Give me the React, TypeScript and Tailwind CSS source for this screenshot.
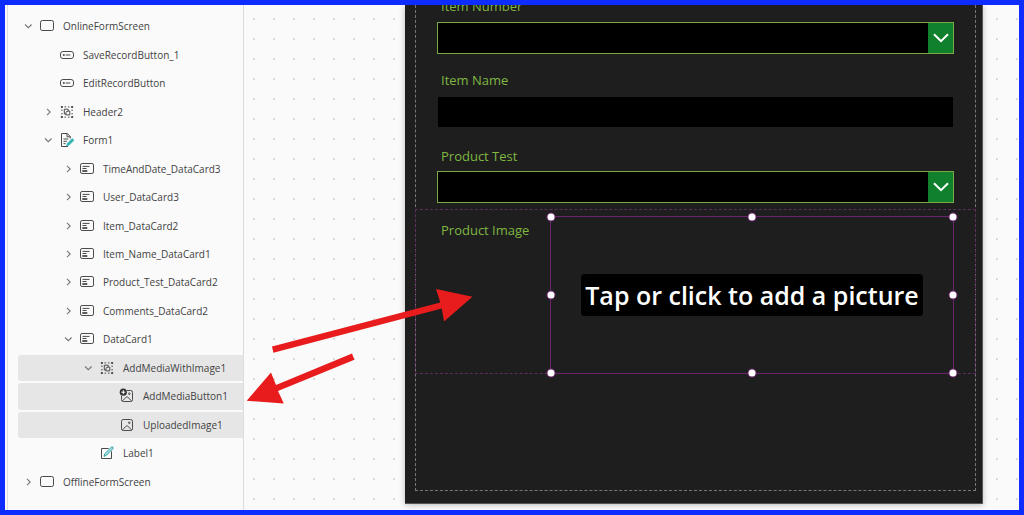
import React from "react";

type IconName = "screen" | "button" | "group" | "form" | "card" | "addMedia" | "image" | "label";

type Node = {
  name: string;
  icon: IconName;
  level: 0 | 1 | 2 | 3 | 4;
  state?: "open" | "closed";
  selected?: boolean;
};

const nodes: Node[] = [
  { name: "OnlineFormScreen", icon: "screen", level: 0, state: "open" },
  { name: "SaveRecordButton_1", icon: "button", level: 1 },
  { name: "EditRecordButton", icon: "button", level: 1 },
  { name: "Header2", icon: "group", level: 1, state: "closed" },
  { name: "Form1", icon: "form", level: 1, state: "open" },
  { name: "TimeAndDate_DataCard3", icon: "card", level: 2, state: "closed" },
  { name: "User_DataCard3", icon: "card", level: 2, state: "closed" },
  { name: "Item_DataCard2", icon: "card", level: 2, state: "closed" },
  { name: "Item_Name_DataCard1", icon: "card", level: 2, state: "closed" },
  { name: "Product_Test_DataCard2", icon: "card", level: 2, state: "closed" },
  { name: "Comments_DataCard2", icon: "card", level: 2, state: "closed" },
  { name: "DataCard1", icon: "card", level: 2, state: "open" },
  { name: "AddMediaWithImage1", icon: "group", level: 3, state: "open", selected: true },
  { name: "AddMediaButton1", icon: "addMedia", level: 4, selected: true },
  { name: "UploadedImage1", icon: "image", level: 4, selected: true },
  { name: "Label1", icon: "label", level: 3 },
  { name: "OfflineFormScreen", icon: "screen", level: 0, state: "closed" },
];

const indent = ["pl-0.5", "pl-[22px]", "pl-[42px]", "pl-[62px]", "pl-[82px]"];

const drawings: Record<IconName, React.ReactNode> = {
  screen: <rect x="1.5" y="2.5" width="13" height="10" rx="1.8" />,
  button: (
    <>
      <rect x="1.5" y="4.5" width="13" height="7" rx="2.4" />
      <circle cx="4.8" cy="8" r="1" fill="currentColor" stroke="none" />
      <path d="M6.7 8h4.6" />
    </>
  ),
  group: (
    <>
      <path d="M5.5 2.9h1.6M9 2.9h1.5M5.5 13.1H7M9 13.1h1.5M2.9 5.5V7M2.9 9v1.5M13.1 5.5V7M13.1 9v1.5" />
      <path d="M7 10H5.3V5.2h3.9v1.9" />
      <path d="M9.2 7.1h1.6v3.8H7V8.6q0-1.5 2.2-1.5z" />
      <g fill="currentColor" stroke="none">
        <rect x="1.9" y="1.9" width="2" height="2" rx=".4" />
        <rect x="12.1" y="1.9" width="2" height="2" rx=".4" />
        <rect x="1.9" y="12.1" width="2" height="2" rx=".4" />
        <rect x="12.1" y="12.1" width="2" height="2" rx=".4" />
      </g>
    </>
  ),
  form: (
    <>
      <path d="M9 14.5H2.5v-13h5.8l3 3v2M8 1.8v3h3.2M4.5 7h4.8M4.5 9.3h3.4M4.5 11.6h2" />
      <path d="m7.6 13.8.6-2.3 5-5 1.8 1.8-5 5z" fill="#35b3b3" stroke="#35b3b3" strokeWidth=".6" />
    </>
  ),
  card: (
    <>
      <rect x="1.5" y="2.5" width="13" height="10" rx="1.6" />
      <path d="M3.5 5.4h7M3.5 7.5h4" />
      <path d="M3.3 10h5" strokeWidth="1.8" />
    </>
  ),
  addMedia: (
    <>
      <path d="M8 2.5h3.7q1.8 0 1.8 1.8v7.4q0 1.8-1.8 1.8H4.3q-1.8 0-1.8-1.8V8" />
      <path d="M3.3 13 7.2 9.2q.8-.7 1.6 0L12.7 13" />
      <circle cx="10.3" cy="5.7" r=".8" />
      <circle cx="4.3" cy="4.2" r="3.6" fill="#333" stroke="none" />
      <path d="M4.3 2.2v4M2.3 4.2h4" stroke="#fff" />
    </>
  ),
  image: (
    <>
      <rect x="2.5" y="2.5" width="11" height="11" rx="1.8" />
      <path d="M3.3 13 7.2 9.2q.8-.7 1.6 0L12.7 13" />
      <circle cx="10.3" cy="5.7" r=".8" />
    </>
  ),
  label: (
    <>
      <path d="M9.6 3.5H2.5v10h10V6.4" />
      <path d="m5 11.3.7-2.4 6.6-6.6q.9-.8 1.6-.1t-.1 1.6l-6.5 6.6z" fill="#a9e0e0" stroke="#2ba3a3" />
    </>
  ),
};

function NodeIcon({ name }: { name: IconName }) {
  return (
    <svg
      aria-hidden="true"
      viewBox="0 0 16 16"
      className="size-4 shrink-0 text-[#4a4a4a]"
      fill="none"
      stroke="currentColor"
      strokeWidth="1"
    >
      {drawings[name]}
    </svg>
  );
}

function TreeRow({ node }: { node: Node }) {
  return (
    <li
      role="treeitem"
      aria-level={node.level + 1}
      aria-selected={!!node.selected}
      aria-expanded={node.state ? node.state === "open" : undefined}
      className="flex min-h-6 flex-1 basis-0 py-px"
    >
      <div
        className={`flex flex-1 items-center rounded-l-[3px] ${indent[node.level]} ${node.selected ? "bg-[#e6e6e6]" : ""}`}
      >
        {node.state ? (
          <button type="button" aria-label={`Toggle ${node.name}`} className="size-4 shrink-0 text-[#777]">
            <svg viewBox="0 0 16 16" className="size-4" fill="none" stroke="currentColor" strokeWidth="1.1">
              <path d={node.state === "open" ? "m5 6.5 3.3 3.2 3.3-3.2" : "m7 4.8 3.2 3.2-3.2 3.2"} />
            </svg>
          </button>
        ) : (
          <span className="size-4 shrink-0" />
        )}
        <span className="ml-[3px] flex items-center gap-2">
          <NodeIcon name={node.icon} />
          <span className="text-[10px] leading-4 whitespace-nowrap text-[#424242]">{node.name}</span>
        </span>
      </div>
    </li>
  );
}

function FieldLabel({ id, children }: { id: string; children: string }) {
  return (
    <label htmlFor={id} className="ml-1 block text-[13px] leading-5 text-[#7fb742]">
      {children}
    </label>
  );
}

function Dropdown({ id }: { id: string }) {
  return (
    <div className="relative flex h-8 border border-[#7aa843]">
      <select id={id} className="min-w-0 flex-1 appearance-none bg-black text-sm text-white outline-none">
        <option value=""></option>
      </select>
      <span className="pointer-events-none absolute inset-y-0 right-0 flex w-[25px] items-center justify-center bg-[#10802c]">
        <svg viewBox="0 0 16 10" className="h-2.5 w-4" fill="none" stroke="#fff" strokeWidth="2">
          <path d="m1 1.3 7 6.9 7-6.9" />
        </svg>
      </span>
    </div>
  );
}

const handles = [
  "left-0 top-0",
  "left-1/2 top-0",
  "left-full top-0",
  "left-0 top-1/2",
  "left-full top-1/2",
  "left-0 top-full",
  "left-1/2 top-full",
  "left-full top-full",
];

const dots =
  "bg-[radial-gradient(circle,#dadada_1px,transparent_1px)] bg-[length:20px_20px]";

export default function App() {
  return (
    <main className="flex min-h-screen overflow-hidden border-5 border-[#0d2cff] bg-[#fafafa] font-['Open_Sans','Noto_Sans',sans-serif]">
      <nav aria-label="Tree view" className="ml-0.5 flex w-[237px] shrink-0 border-x border-[#dcdcdc]">
        <ul role="tree" className="flex flex-1 flex-col pt-[7px] pb-3.5 pl-2.5">
          {nodes.map((node) => (
            <TreeRow key={node.name} node={node} />
          ))}
        </ul>
      </nav>

      <section aria-label="Canvas" className="relative flex min-w-0 flex-1">
        <div className={`w-[161px] shrink-0 bg-position-[0px_4px] ${dots}`} />

        <div className="mb-1.5 flex min-w-0 flex-1 flex-col border-r border-b border-[#555] bg-[#1e1e1e] pr-1.5 pb-3 pl-2.5 shadow-[0_1px_6px_rgba(0,0,0,0.25)]">
          <form className="flex-1 border-x border-b border-dashed border-[#777]">
            <div className="-mt-[9px] px-[21px]">
              <FieldLabel id="item-number">Item Number</FieldLabel>
              <div className="mt-1.5">
                <Dropdown id="item-number" />
              </div>
              <div className="mt-4">
                <FieldLabel id="item-name">Item Name</FieldLabel>
              </div>
              <div className="mt-[7px] px-px">
                <input id="item-name" type="text" className="block h-[30px] w-full bg-black px-2 text-sm text-white outline-none" />
              </div>
              <div className="mt-[19px]">
                <FieldLabel id="product-test">Product Test</FieldLabel>
              </div>
              <div className="mt-[5px]">
                <Dropdown id="product-test" />
              </div>
            </div>

            <div className="-mx-px mt-1.5 flex border border-dashed border-[#5c2d5c] px-[21px]">
              <div className="w-[113px] shrink-0 pt-2.5">
                <FieldLabel id="product-image">Product Image</FieldLabel>
              </div>
              <div className="relative mt-1.5 -mb-px flex h-[158px] flex-1 items-center justify-center border border-[#6c246c]">
                <button
                  id="product-image"
                  type="button"
                  className="h-[42px] rounded-[4px] bg-black px-1 text-[25px] leading-8 font-semibold whitespace-nowrap text-white"
                >
                  Tap or click to add a picture
                </button>
                {handles.map((place) => (
                  <span
                    key={place}
                    className={`absolute size-[7px] -translate-1/2 rounded-full bg-white shadow-[0_0_0_1px_#6c246c] ${place}`}
                  />
                ))}
              </div>
            </div>
          </form>
        </div>

        <div className={`w-9 shrink-0 bg-position-[4px_4px] ${dots}`} />

        <svg
          aria-hidden="true"
          viewBox="244 340 240 70"
          className="pointer-events-none absolute top-[335px] left-0 h-[70px] w-[240px] overflow-visible"
          fill="#e81c1c"
        >
          <path d="M272 346.6 440.3 302.4 436 289 472.4 296.7 444 321.4 441.8 308.4 273.4 352.7z" />
          <path d="M352 353.6 276 385 271 372.6 246.7 400.7 283.8 403.4 278 391 354.4 359.7z" />
        </svg>
      </section>
    </main>
  );
}
